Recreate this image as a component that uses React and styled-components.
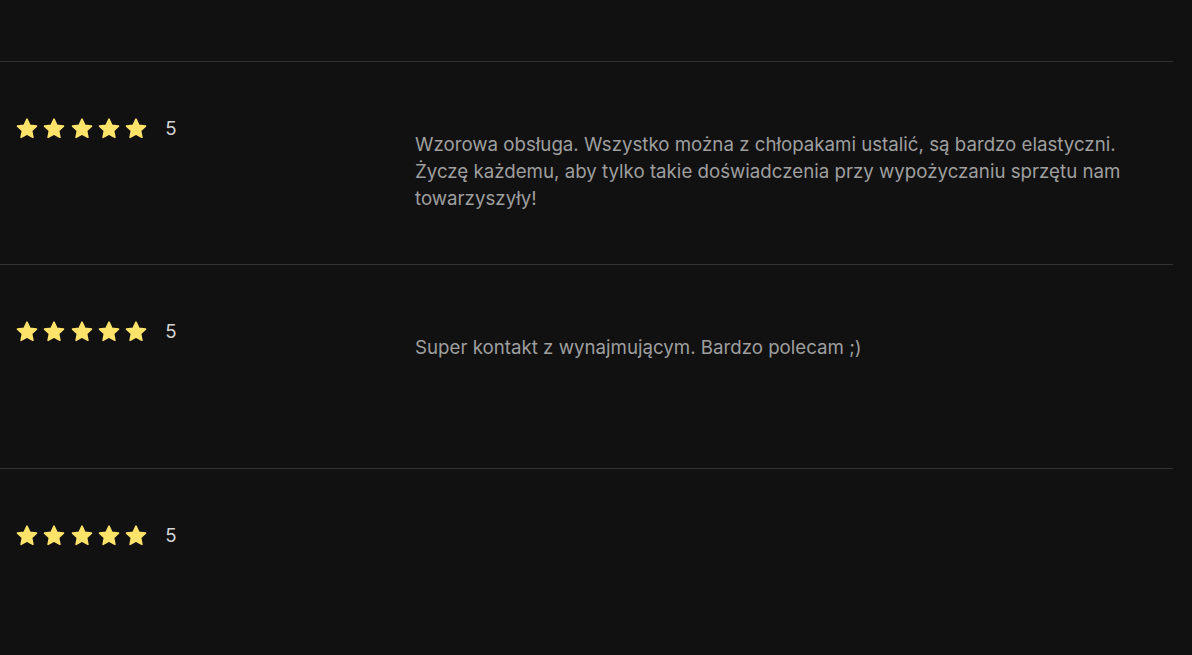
import React from 'react';
import styled, { createGlobalStyle } from 'styled-components';

const GlobalStyle = createGlobalStyle`
  html, body {
    margin: 0;
    padding: 0;
    background: #111111;
  }
  body {
    font-family: Inter, "Noto Sans", sans-serif;
  }
`;

const Page = styled.div`
  width: 1173px;
  padding-top: 61px;
  min-height: 655px;
  box-sizing: border-box;
`;

const Review = styled.div`
  display: grid;
  grid-template-columns: 415px 1fr;
  height: ${(p) => (p.$first ? '203px' : '204px')};
  box-sizing: border-box;
  border-top: 1px solid #333333;
`;

const Rating = styled.div`
  display: flex;
  align-items: center;
  padding: 55px 0 0 15px;
  height: 24px;
`;

const Stars = styled.div`
  display: flex;
  gap: 3.3px;
`;

const Score = styled.span`
  margin-left: 17px;
  font-size: 18.7px;
  color: #d4d4d4;
  line-height: 24px;
`;

const Text = styled.p`
  margin: 0;
  padding: 69px 40px 0 0;
  font-size: 18.7px;
  line-height: 27px;
  color: #9f9f9f;
`;

const Star = () => (
  <svg width="24" height="24" viewBox="0 0 24 24">
    <path
      d="M12 2.2l2.9 6.1 6.6.8-4.9 4.6 1.3 6.6L12 17l-5.9 3.3 1.3-6.6-4.9-4.6 6.6-.8z"
      fill="#fde36a"
      stroke="#fde36a"
      strokeWidth="1.6"
      strokeLinejoin="round"
    />
  </svg>
);

const reviews = [
  {
    score: 5,
    text: 'Wzorowa obsługa. Wszystko można z chłopakami ustalić, są bardzo elastyczni. Życzę każdemu, aby tylko takie doświadczenia przy wypożyczaniu sprzętu nam towarzyszyły!',
  },
  { score: 5, text: 'Super kontakt z wynajmującym. Bardzo polecam ;)' },
  { score: 5, text: '' },
];

export default function App() {
  return (
    <>
      <GlobalStyle />
      <Page>
        {reviews.map((r, i) => (
          <Review key={i} $first={i === 0}>
            <div>
              <Rating>
                <Stars>
                  {[0, 1, 2, 3, 4].map((s) => (
                    <Star key={s} />
                  ))}
                </Stars>
                <Score>{r.score}</Score>
              </Rating>
            </div>
            <Text>{r.text}</Text>
          </Review>
        ))}
      </Page>
    </>
  );
}
